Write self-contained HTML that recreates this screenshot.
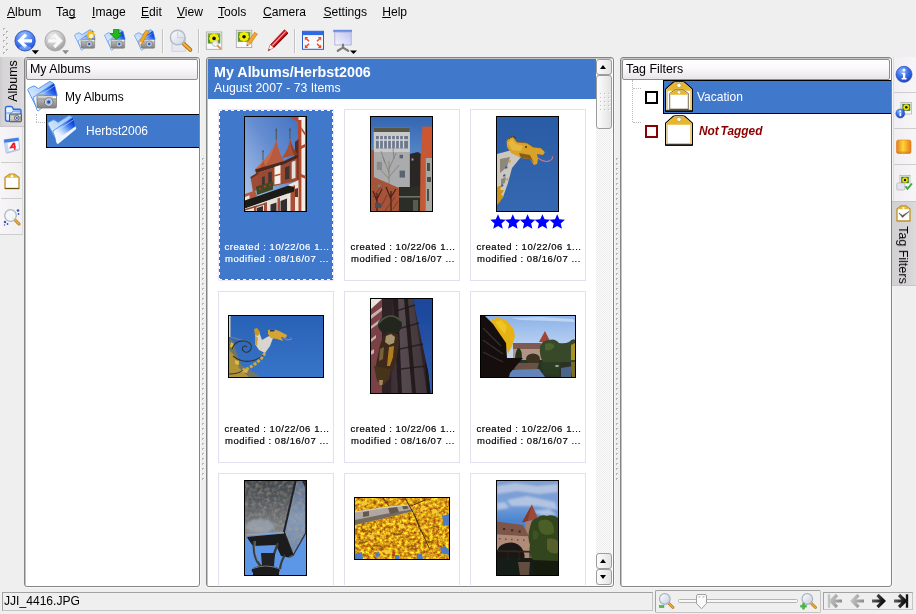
<!DOCTYPE html>
<html>
<head>
<meta charset="utf-8">
<title>digiKam</title>
<style>
html,body{margin:0;padding:0;}
body{width:916px;height:614px;overflow:hidden;background:#efefef;font-family:"Liberation Sans",sans-serif;font-size:13px;color:#000;position:relative;}
.abs{position:absolute;}
.menu span{position:absolute;top:5px;white-space:nowrap;font-size:12.1px;line-height:15px;}
.menu u{text-decoration:underline;text-underline-offset:1px;text-decoration-skip-ink:none;}
.frame{position:absolute;border:1px solid #838583;border-radius:3px;background:#fff;box-sizing:border-box;box-shadow:inset 1px 1px 0 #c4c4c4, 1px 1px 0 #f7f7f7;}
.hdr{position:absolute;box-sizing:border-box;border:1px solid #8e8e8e;border-radius:2px;background:linear-gradient(#ffffff,#fbf9fb 40%,#e8e6e8);font-size:12.4px;line-height:19px;padding-left:3px;white-space:nowrap;}
.sel{background:#4078cc;}
.cell{position:absolute;width:116px;height:172px;box-sizing:border-box;border:1px solid #e3dff0;background:#fff;}
.cell.on{background:#4078cc;border:1px solid #f4e8f0;}
.cell.on::before{content:"";position:absolute;left:0;top:0;right:0;bottom:0;background:
repeating-linear-gradient(90deg,#fff 0 3px,#3a70c8 3px 6px) 0 0/100% 1px no-repeat,
repeating-linear-gradient(90deg,#fff 0 3px,#3a70c8 3px 6px) 0 100%/100% 1px no-repeat,
repeating-linear-gradient(180deg,#fff 0 3px,#3a70c8 3px 6px) 0 0/1px 100% no-repeat,
repeating-linear-gradient(180deg,#fff 0 3px,#3a70c8 3px 6px) 100% 0/1px 100% no-repeat;}
.cap{position:absolute;left:1px;width:114px;-webkit-text-stroke:0.2px currentColor;text-align:center;font-size:9.5px;line-height:12px;letter-spacing:0.55px;white-space:nowrap;top:131px;}
.cell.on .cap{color:#fff;}
.ph{position:absolute;border:1px solid #000;box-sizing:border-box;overflow:hidden;}
.ph svg{display:block;}
.tab{position:absolute;box-sizing:border-box;}
.sunk{position:absolute;box-sizing:border-box;border:1px solid;border-color:#a2a2a2 #c4c4c4 #c4c4c4 #a2a2a2;}
.sbtn{position:absolute;width:16px;box-sizing:border-box;border:1px solid #9c9c9c;border-radius:3px;background:linear-gradient(90deg,#fcfcfc,#f0f0f0 50%,#e2e2e2);}
.sbtn i{position:absolute;left:3px;width:0;height:0;border-left:3.500px solid transparent;border-right:3.500px solid transparent;}
.sbtn i.up{top:5px;border-bottom:4px solid #000;}
.sbtn i.dn{top:5px;border-top:4px solid #000;}
</style>
</head>
<body><div id="root" style="position:absolute;left:0;top:0;width:916px;height:614px;will-change:transform;">


<svg width="0" height="0" style="position:absolute">
<defs>
<filter id="b" x="-5%" y="-5%" width="110%" height="110%"><feGaussianBlur stdDeviation="0.55"/></filter>
<filter id="b2" x="-5%" y="-5%" width="110%" height="110%"><feGaussianBlur stdDeviation="1.1"/></filter>
<filter id="leaf" x="0" y="0" width="100%" height="100%" color-interpolation-filters="sRGB">
<feTurbulence type="fractalNoise" baseFrequency="0.32" numOctaves="3" seed="11" result="n"/>
<feColorMatrix in="n" type="matrix" values="0.7 0 0 0 0.5  1.2 0 0 0 0.02  0.2 0 0 0 0  0 0 0 0 1"/>
</filter>
<filter id="grime" x="0" y="0" width="100%" height="100%" color-interpolation-filters="sRGB">
<feTurbulence type="fractalNoise" baseFrequency="0.28" numOctaves="3" seed="3" result="n"/>
<feColorMatrix in="n" type="matrix" values="0 0 0 0 0.72  0 0 0 0 0.66  0 0 0 0 0.56  2.2 0 0 0 -0.85"/>
</filter>
</defs>
</svg>


<svg width="0" height="0" style="position:absolute">
<defs>
<linearGradient id="fback" x1="0" y1="1" x2="1" y2="0"><stop offset="0" stop-color="#f4faff"/><stop offset="1" stop-color="#8cbcf6"/></linearGradient>
<linearGradient id="ffront" x1="0.150" y1="0.900" x2="0.850" y2="0.100"><stop offset="0" stop-color="#ffffff"/><stop offset="0.300" stop-color="#e4f0ff"/><stop offset="0.550" stop-color="#8ab8f8"/><stop offset="0.800" stop-color="#2c68ea"/><stop offset="1" stop-color="#0a34cc"/></linearGradient>
<linearGradient id="camg" x1="0" y1="0" x2="0" y2="1"><stop offset="0" stop-color="#e0e0e0"/><stop offset="0.450" stop-color="#a8a8a8"/><stop offset="1" stop-color="#808080"/></linearGradient>
<g id="fold32">
<path d="M1 9.500 Q0.400 8 2 7.200 L6 5.200 Q7 4.700 8 5.300 L11.500 7.600 L22 0.900 Q23 0.300 24 0.900 L26.500 2.300 L29 14 L11 29.500Z" fill="url(#fback)" stroke="#4a8cec" stroke-width="0.900"/>
<path d="M6 16.500 L26 2.900 Q27.100 2.400 27.400 3.500 L30.200 14.500 L11.600 29.600 Q10.500 30.200 10 29Z" fill="url(#ffront)" stroke="#3f80ea" stroke-width="0.800"/><path d="M7 18.500 L27.600 4.800" stroke="#dcecff" stroke-width="0.700" opacity="0.800"/>
</g>
<g id="cam32">
<rect x="10" y="14.500" width="19.500" height="12.500" rx="1.300" fill="url(#camg)" stroke="#787878" stroke-width="0.800"/>
<rect x="10" y="17.300" width="19.500" height="1.600" fill="#8c8c8c" opacity="0.550"/>
<rect x="12" y="13.200" width="5" height="1.800" fill="#a0a0a0"/>
<circle cx="21.700" cy="21" r="4.300" fill="#d8d8d8" stroke="#6c6c6c" stroke-width="0.800"/>
<circle cx="21.700" cy="21" r="2.700" fill="#9ab0d8"/>
<circle cx="21.700" cy="21" r="1.500" fill="#1c48c0"/>
<rect x="26" y="15.600" width="2.800" height="1.500" fill="#f8f8f8"/>
</g>
<g id="tag30">
<path d="M1 7.800 L8.500 1.200 Q9.300 0.700 10.300 0.700 L17.700 0.700 Q18.700 0.700 19.500 1.200 L27 7.800 L27 29.300 L1 29.300Z" fill="#fff" stroke="#000" stroke-width="1.100" stroke-linejoin="round"/>
<path d="M1.700 8.100 L8.900 1.800 Q9.500 1.400 10.300 1.400 L17.700 1.400 Q18.500 1.400 19.100 1.800 L26.300 8.100 L26.300 9.500 L1.700 9.500Z" fill="#e8b62c"/>
<path d="M2.500 9.500 L2.500 27.800 L25.500 27.800 L25.500 9.500" fill="none" stroke="#e4b440" stroke-width="1"/>
<path d="M1 29 H27" stroke="#000" stroke-width="1.300"/>
<circle cx="14" cy="4.200" r="2.100" fill="#fff" stroke="#a88420" stroke-width="0.500"/>
</g>
</defs>
</svg>

<!-- MENU -->
<div class="menu abs" style="left:0;top:0;width:916px;height:23px;">
<span style="left:7px"><u>A</u>lbum</span>
<span style="left:56px">Ta<u>g</u></span>
<span style="left:92px"><u>I</u>mage</span>
<span style="left:141px"><u>E</u>dit</span>
<span style="left:177px"><u>V</u>iew</span>
<span style="left:218px"><u>T</u>ools</span>
<span style="left:263px"><u>C</u>amera</span>
<span style="left:323.400px"><u>S</u>ettings</span>
<span style="left:382.200px"><u>H</u>elp</span>
</div>

<!-- TOOLBAR placeholder -->
<div id="toolbar" class="abs" style="left:0;top:22px;width:916px;height:35px;">
<svg width="916" height="35" viewBox="0 22 916 35">
<defs>
<radialGradient id="gb" cx="0.45" cy="0.25" r="0.8"><stop offset="0" stop-color="#a4c6ff"/><stop offset="0.5" stop-color="#4a82f2"/><stop offset="1" stop-color="#1c48c8"/></radialGradient>
<radialGradient id="gg" cx="0.4" cy="0.3" r="0.75"><stop offset="0" stop-color="#f4f4f4"/><stop offset="0.5" stop-color="#c8c8c8"/><stop offset="1" stop-color="#9a9a9a"/></radialGradient>
<linearGradient id="ff" x1="0" y1="0.600" x2="1" y2="0"><stop offset="0" stop-color="#dceeff"/><stop offset="0.45" stop-color="#7ab0f4"/><stop offset="1" stop-color="#1446d8"/></linearGradient>
<linearGradient id="cam" x1="0" y1="0" x2="0" y2="1"><stop offset="0" stop-color="#d8d8d8"/><stop offset="0.5" stop-color="#a4a4a4"/><stop offset="1" stop-color="#7c7c7c"/></linearGradient>
<linearGradient id="lens" x1="0" y1="0" x2="1" y2="1"><stop offset="0" stop-color="#ffffff"/><stop offset="1" stop-color="#c8d4e4"/></linearGradient>
<g id="albico">
<path d="M1.500 8 Q1 6.500 2.500 6 L7 4.500 L9 6 L12 5 L14 21 L8 22 Q6 22 5.500 20Z" fill="#c4e0fc" stroke="#6ea4e8" stroke-width="0.800"/>
<path d="M3.500 10 L17 3.500 Q18.500 3 19 4.500 L21 14 L8 22 Q6.500 22.500 6 20.500Z" fill="url(#ff)" stroke="#5a94e6" stroke-width="0.700"/>
<rect x="8.500" y="11.500" width="13" height="9" rx="1" fill="url(#cam)" stroke="#6c6c6c" stroke-width="0.700"/>
<rect x="8.500" y="13.300" width="13" height="1.300" fill="#8a8a8a" opacity="0.600"/>
<rect x="10" y="10.500" width="3.500" height="1.400" fill="#9a9a9a"/>
<circle cx="15.600" cy="16.300" r="2.900" fill="#d0d0d0" stroke="#707070" stroke-width="0.700"/>
<circle cx="15.600" cy="16.300" r="1.400" fill="#2c58c8"/>
<rect x="19" y="12.300" width="2" height="1.300" fill="#f4f4f4"/>
</g>
<g id="sunf">
<rect x="0" y="0" width="15.500" height="17.300" fill="#fbfbfb" stroke="#a4a4a4" stroke-width="0.800"/>
<rect x="1.500" y="1.500" width="12.500" height="10" fill="#5c9230"/>
<rect x="1.500" y="1.500" width="12.500" height="3" fill="#88aa48" opacity="0.600"/>
<g fill="#f6ee00"><circle cx="7.750" cy="6.400" r="3.300"/><circle cx="11.05" cy="6.40" r="1.75"/><circle cx="10.08" cy="8.73" r="1.75"/><circle cx="7.75" cy="9.70" r="1.75"/><circle cx="5.42" cy="8.73" r="1.75"/><circle cx="4.45" cy="6.40" r="1.75"/><circle cx="5.42" cy="4.07" r="1.75"/><circle cx="7.75" cy="3.10" r="1.75"/><circle cx="10.08" cy="4.07" r="1.75"/></g>
<circle cx="7.750" cy="6.400" r="1.800" fill="#120c04"/>
</g>
</defs>
<!-- handle -->
<g fill="#b4b4b4"><rect x="3" y="28" width="2" height="1"/><rect x="3" y="29" width="1" height="1"/><rect x="3" y="34" width="2" height="1"/><rect x="3" y="35" width="1" height="1"/><rect x="3" y="40" width="2" height="1"/><rect x="3" y="41" width="1" height="1"/><rect x="3" y="46" width="2" height="1"/><rect x="3" y="47" width="1" height="1"/><rect x="3" y="52" width="2" height="1"/><rect x="3" y="53" width="1" height="1"/><rect x="6" y="31" width="2" height="1"/><rect x="6" y="32" width="1" height="1"/><rect x="6" y="37" width="2" height="1"/><rect x="6" y="38" width="1" height="1"/><rect x="6" y="43" width="2" height="1"/><rect x="6" y="44" width="1" height="1"/><rect x="6" y="49" width="2" height="1"/><rect x="6" y="50" width="1" height="1"/></g><g fill="#ffffff"><rect x="4" y="29" width="1" height="1"/><rect x="4" y="35" width="1" height="1"/><rect x="4" y="41" width="1" height="1"/><rect x="4" y="47" width="1" height="1"/><rect x="4" y="53" width="1" height="1"/><rect x="7" y="32" width="1" height="1"/><rect x="7" y="38" width="1" height="1"/><rect x="7" y="44" width="1" height="1"/><rect x="7" y="50" width="1" height="1"/></g>
<!-- back -->
<circle cx="25.100" cy="40.800" r="10.200" fill="url(#gb)" stroke="#2a4eb8" stroke-width="0.800"/>
<path d="M32 40.800 H20.500 M26 34.600 L19.600 40.800 L26 47" stroke="#fff" stroke-width="3.200" fill="none" stroke-linejoin="miter"/><ellipse cx="25.100" cy="48" rx="6" ry="2.200" fill="#9cc0ff" opacity="0.550"/>
<path d="M31.700 50.300 L39 50.300 L35.350 54.300Z" fill="#000"/>
<!-- forward -->
<circle cx="55.100" cy="40.800" r="10.200" fill="url(#gg)" stroke="#a4a4a4" stroke-width="0.800"/>
<path d="M48.200 40.800 H59.700 M54.200 34.600 L60.600 40.800 L54.200 47" stroke="#f8f8f8" stroke-width="3.200" fill="none" stroke-linejoin="miter"/>
<path d="M62.200 50.300 L69 50.300 L65.600 54.300Z" fill="#8c8c8c"/>
<!-- album icons -->
<g transform="translate(74 29.300) scale(0.700)"><use href="#fold32"/><use href="#cam32"/></g>
<path d="M91 29.500 l1.100 2.600 l2.700 -1 l-1 2.700 l2.600 1.200 l-2.600 1.200 l1 2.700 l-2.700 -1 l-1.100 2.600 l-1.100 -2.600 l-2.700 1 l1 -2.700 l-2.600 -1.200 l2.600 -1.200 l-1 -2.700 l2.700 1z" fill="#f8b820"/><circle cx="91" cy="36" r="2.200" fill="#fff6c0"/>
<g transform="translate(104 29.300) scale(0.700)"><use href="#fold32"/><use href="#cam32"/></g>
<path d="M113.500 29.500 h5.500 v4 h3.500 l-6.250 6 l-6.250 -6 h3.500z" fill="#22b81c" stroke="#0c7a0c" stroke-width="0.700"/>
<g transform="translate(134 29.300) scale(0.700)"><use href="#fold32"/><use href="#cam32"/></g>
<path d="M146 30 l3 1.600 l-6.500 11.500 l-3.400 1.800 l0.400 -3.600z" fill="#f4a820" stroke="#b87410" stroke-width="0.600"/><path d="M139.100 44.900 l0.400-3.600 l3 1.800z" fill="#f4d8b0"/>
<!-- sep -->
<rect x="162" y="29" width="1" height="24" fill="#c2c2c2"/><rect x="163" y="29" width="1" height="24" fill="#fafafa"/>
<!-- magnifier -->
<rect x="172" y="38" width="13.500" height="13.300" fill="#e6e8f2" stroke="#c8ccd8" stroke-width="0.800"/>
<path d="M184 44 L190.300 49.800" stroke="#b06c10" stroke-width="4" stroke-linecap="round"/><path d="M184 44 L190.300 49.800" stroke="#f4b040" stroke-width="2.200" stroke-linecap="round"/>
<circle cx="177.700" cy="37.500" r="7.300" fill="url(#lens)" fill-opacity="0.900" stroke="#b4bac8" stroke-width="1.500"/>
<path d="M177.700 31.500 v6 h6" stroke="#ccd0dc" stroke-width="1" fill="none"/>
<rect x="198" y="29" width="1" height="24" fill="#c2c2c2"/><rect x="199" y="29" width="1" height="24" fill="#fafafa"/>
<!-- view image -->
<use href="#sunf" x="206.300" y="32"/>
<path d="M217.300 45.500 L220.300 48.300" stroke="#d89a48" stroke-width="2" stroke-linecap="round"/><circle cx="215.300" cy="43.500" r="2.900" fill="#f4f6fa" fill-opacity="0.880" stroke="#b4bac8" stroke-width="0.900"/>
<!-- edit image -->
<use href="#sunf" x="236.300" y="30.300"/>
<path d="M254.600 32.300 l2.800 1.700 l-7 10 l-3.600 2 l0.600 -3.800z" fill="#f6a628" stroke="#c07414" stroke-width="0.600"/><path d="M246.800 46 l0.600 -3.800 l3 1.800z" fill="#e8c8a0"/><path d="M246.800 46 l0.300 -1.600 l1.200 0.700z" fill="#803020"/>
<!-- red pencil -->
<path d="M284.500 29.800 L288 33 L273.500 47.500 L268.300 50.800 L270.300 44.800Z" fill="#d01018" stroke="#8a0810" stroke-width="0.600"/>
<path d="M272.300 45.500 L285.800 31.300" stroke="#ffb0b4" stroke-width="1.100" opacity="0.900"/><path d="M273.700 47.300 L287.800 33.200" stroke="#7a0810" stroke-width="1.200"/>
<path d="M268.300 50.800 L270.300 44.800 L273.500 47.500Z" fill="#f8f0e8"/><path d="M268.300 50.800 l0.700 -2 l1.100 0.900z" fill="#800810"/>
<rect x="294" y="29" width="1" height="24" fill="#c2c2c2"/><rect x="295" y="29" width="1" height="24" fill="#fafafa"/>
<!-- fullscreen -->
<rect x="302.500" y="31.300" width="21" height="18" fill="#f8f8ff" stroke="#2a5cc8" stroke-width="1"/>
<rect x="302.500" y="31.300" width="21" height="3.800" fill="#2f6ae0"/>
<g fill="#f04a1c" stroke="#f04a1c" stroke-width="1.500">
<path d="M304.800 37 h3.400 l-3.400 3.400z" stroke="none"/><path d="M306 38.200 L309 41.200"/>
<path d="M321.200 37 h-3.400 l3.400 3.400z" stroke="none"/><path d="M320 38.200 L317 41.200"/>
<path d="M304.800 48 h3.400 l-3.400 -3.400z" stroke="none"/><path d="M306 46.800 L309 43.800"/>
<path d="M321.200 48 h-3.400 l3.400 -3.400z" stroke="none"/><path d="M320 46.800 L317 43.800"/>
</g>
<!-- slideshow -->
<rect x="333.300" y="29.800" width="18.700" height="2.400" fill="#6a8ce0"/>
<defs><linearGradient id="scr" x1="0" y1="1" x2="1" y2="0"><stop offset="0" stop-color="#f4f4fc"/><stop offset="1" stop-color="#c0c4f0"/></linearGradient></defs><rect x="334.800" y="32" width="16.400" height="13" fill="url(#scr)" stroke="#a4a8d4" stroke-width="0.800"/>
<path d="M343 44.500 V48 M343 47.600 L337.800 50.800 M343 47.600 L348.200 50.800" stroke="#7c7c7c" stroke-width="2.200" fill="none" stroke-linecap="round"/>
<path d="M350 50.500 L357 50.500 L353.500 54Z" fill="#000"/>
</svg></div>


<!-- LEFT SIDEBAR -->

<div class="abs" style="left:0;top:57px;width:24px;height:70px;background:linear-gradient(90deg,#cccacc,#d6d4d6 12%,#dad8da 70%,#dedcde);border-bottom:1px solid #c6c6c6;box-sizing:border-box;border-radius:0 2px 0 0;"></div>
<div class="abs" style="left:0px;top:127px;width:23px;height:108px;background:linear-gradient(90deg,#f7f5f7,#f1eff1);border-right:1px solid #dcdcdc;border-bottom:1px solid #cdcdcd;box-sizing:border-box;"></div>
<div class="abs" style="left:1px;top:162px;width:21px;height:1px;background:#cdcdcd;"></div>
<div class="abs" style="left:1px;top:198px;width:21px;height:1px;background:#cdcdcd;"></div>
<div class="abs" style="left:1px;top:234px;width:21px;height:1px;background:#cdcdcd;"></div>
<div class="abs" style="left:0;top:60px;width:23px;height:43px;"><div style="position:absolute;left:13px;top:21px;transform:translate(-50%,-50%) rotate(-90deg);font-size:12.500px;white-space:nowrap;line-height:14px;">Albums</div></div>
<svg class="abs" style="left:4px;top:105px;" width="18" height="18" viewBox="0 0 18 18">
<defs><linearGradient id="sf" x1="0" y1="0" x2="1" y2="1"><stop offset="0" stop-color="#ffffff"/><stop offset="0.5" stop-color="#d4e6ff"/><stop offset="1" stop-color="#6ea6f6"/></linearGradient></defs>
<path d="M1.500 3.200 Q1.500 1.500 3.200 1.500 L7 1.500 Q8.300 1.500 8.800 2.800 L9.300 4.200 L15.500 4.200 Q17 4.200 17 5.700 L17 14.500 Q17 16.300 15.300 16.300 L3.200 16.300 Q1.500 16.300 1.500 14.600Z" fill="url(#sf)" stroke="#2c6ce2" stroke-width="1.400"/>
<path d="M2.400 8 L7 8 Q8 8 8.500 7 L9 6 L16.200 6" stroke="#4a86ea" stroke-width="0.900" fill="none"/>
<rect x="5.500" y="9" width="11.800" height="7.800" rx="0.800" fill="#b4b4b4" stroke="#4a4a52" stroke-width="0.900"/>
<rect x="6.500" y="11" width="4" height="3.500" fill="#d0d0d0"/>
<circle cx="12.800" cy="13" r="2.300" fill="#e4e4e4" stroke="#50505a" stroke-width="0.800"/><circle cx="12.800" cy="13" r="1" fill="#2c58c8"/>
<rect x="14.800" y="9.800" width="1.800" height="1.200" fill="#f4f4f4"/>
</svg>
<!-- calendar -->
<svg class="abs" style="left:3px;top:137px;" width="18" height="17" viewBox="0 0 18 17">
<path d="M1 2.800 L15.500 0.800 L16.500 12 L3.200 15.800Z" fill="#fbfbff" stroke="#9ab0d8" stroke-width="0.800"/>
<path d="M1 2.800 L15.500 0.800 L15.800 3.800 L1.500 6Z" fill="#3f7cea"/>
<path d="M1.500 6 L4.500 5.500 L6 15 L3.200 15.800Z" fill="#c4d8f8"/>
<path d="M11 5.800 L7.800 10.500 L12.800 9.800 M11.300 5.800 L11.800 12.800" stroke="#ee1c24" stroke-width="1.700" fill="none"/>
<path d="M3.200 15.800 L16.500 12 L16.800 13 L3.800 16.800Z" fill="#b4c0d8"/>
</svg>
<!-- tag -->
<svg class="abs" style="left:4px;top:173px;" width="16" height="17" viewBox="0 0 16 17">
<path d="M1 4.500 L5.500 1.200 L10.500 1.200 L15 4.500 L15 15.500 L1 15.500Z" fill="#fff" stroke="#c09020" stroke-width="1.300" stroke-linejoin="round"/>
<path d="M1.600 4.800 L5.700 1.800 L10.300 1.800 L14.400 4.800Z" fill="#e8b830"/>
<circle cx="8" cy="3.300" r="1.200" fill="#fff"/>
<path d="M1 15.500 H15" stroke="#6a5010" stroke-width="1"/>
</svg>
<!-- find -->
<svg class="abs" style="left:3px;top:208px;" width="18" height="18" viewBox="0 0 18 18">
<path d="M10.500 10.500 L16 16" stroke="#b87818" stroke-width="3" stroke-linecap="round"/><path d="M10.500 10.500 L16 16" stroke="#f0b040" stroke-width="1.400" stroke-linecap="round"/>
<circle cx="7.500" cy="7.500" r="5.800" fill="#f4f6fa" fill-opacity="0.900" stroke="#b0b6c4" stroke-width="1.300"/>
<circle cx="15" cy="2.500" r="1.300" fill="#2c58c8"/><circle cx="15.500" cy="6" r="0.900" fill="#2c58c8"/><circle cx="2" cy="14" r="1.200" fill="#2c58c8"/><circle cx="4.500" cy="16" r="0.900" fill="#2c58c8"/><circle cx="1.500" cy="17" r="0.700" fill="#2c58c8"/>
</svg>

<!-- LEFT PANEL -->
<div class="frame" style="left:24px;top:57px;width:176px;height:530px;"></div>
<div class="hdr" style="left:26px;top:59px;width:172px;height:21px;">My Albums</div>

<svg class="abs" style="left:27px;top:81px;" width="32" height="32" viewBox="0 0 32 32"><use href="#fold32"/><use href="#cam32"/></svg>
<div class="abs" style="left:36px;top:114px;width:0;height:8px;border-left:1px dotted #bcbcbc;"></div>
<div class="abs" style="left:36px;top:122px;width:9px;height:0;border-top:1px dotted #bcbcbc;"></div>
<div class="abs" style="left:65px;top:90px;font-size:12px;">My Albums</div>
<div class="abs sel" style="left:46px;top:114px;width:153px;height:34px;box-sizing:border-box;border:1px solid #000;border-right:none;"></div>

<svg class="abs" style="left:47px;top:115px;" width="31" height="31" viewBox="0 0 32 32"><use href="#fold32"/><path d="M9 26.200 L29.500 11.500 L30.200 14.500 L11.600 29.600 Q10.500 30.200 10 29Z" fill="#f0f4ff"/></svg>
<div class="abs" style="left:86px;top:124px;font-size:12px;color:#fff;">Herbst2006</div>


<!-- splitters -->
<svg class="abs" style="left:200px;top:158px;" width="6" height="324"><defs><pattern id="sd" width="6" height="5" patternUnits="userSpaceOnUse"><rect x="2" y="0" width="2" height="1" fill="#b6b6b6"/><rect x="2" y="1" width="1" height="1" fill="#b6b6b6"/><rect x="3" y="1" width="1" height="1" fill="#fff"/></pattern></defs><rect width="6" height="324" fill="url(#sd)"/></svg>
<svg class="abs" style="left:614px;top:158px;" width="6" height="324"><rect width="6" height="324" fill="url(#sd)"/></svg>

<!-- CENTER PANEL -->
<div class="frame" style="left:206px;top:57px;width:408px;height:530px;"></div>
<div class="abs sel" style="left:208px;top:59px;width:388px;height:40px;"></div>
<div class="abs" style="left:214px;top:64px;font-size:14.3px;font-weight:bold;color:#fff;white-space:nowrap;">My Albums/Herbst2006</div>
<div class="abs" style="left:214px;top:81px;font-size:12.25px;color:#fff;white-space:nowrap;">August 2007 - 73 Items</div>

<div id="grid" class="abs" style="left:208px;top:99px;width:388px;height:486px;overflow:hidden;">

<!-- cell 1 -->
<div class="cell on" style="left:10px;top:10px;">
<div class="ph" style="left:25px;top:6px;width:63px;height:96px;">
<svg width="61" height="94" viewBox="0 0 61 94">
<defs><linearGradient id="s1" x1="1" y1="0" x2="0" y2="1"><stop offset="0" stop-color="#4070c0"/><stop offset="0.45" stop-color="#648cd0"/><stop offset="0.85" stop-color="#a0bce6"/><stop offset="1" stop-color="#b0c8ea"/></linearGradient></defs>
<rect width="61" height="94" fill="url(#s1)"/>
<g filter="url(#b)">
<!-- right timber wall -->
<rect x="53" y="0" width="9" height="94" fill="#f2ece6"/>
<path d="M44.500 0 L53.500 5.500 L53.500 0Z" fill="#b8492a"/>
<rect x="53" y="3" width="3.400" height="91" fill="#b24a2c"/>
<path d="M56 29 L61 26.500 L61 29.500 L56 32Z M56 57 L61 59 L61 62 L56 60Z M56.300 10 l4.700 7 v3 l-4.700 -7z M60 0 h1 v94 h-1z" fill="#b24a2c"/>
<!-- shadow behind 2nd tower -->
<path d="M50 25 L53.500 22 L53.500 66 L50 66Z" fill="#5a2c20"/>
<!-- poles -->
<path d="M31.300 11.500 V23" stroke="#4a5a56" stroke-width="1.100"/><circle cx="31.300" cy="13.500" r="0.900" fill="#4a5a56"/>
<path d="M45 11 V22" stroke="#4a5a56" stroke-width="1.100"/><circle cx="45" cy="13" r="0.900" fill="#4a5a56"/>
<path d="M18 33 V43" stroke="#4a5a56" stroke-width="1"/><circle cx="18" cy="34.500" r="0.800" fill="#4a5a56"/>
<!-- second roof -->
<path d="M45 21 Q44.500 30 37 41 L52.500 37.500 Q47 30 45 21Z" fill="#a85034"/>
<path d="M45 21 Q46 30 52.500 37.500 L49 38.300 Q45.500 30 45 21Z" fill="#8a3c28"/>
<!-- main roof -->
<path d="M31.300 22 Q30 34 10 52.500 L39 44 Q33 34 31.300 22Z" fill="#b85a3c"/>
<path d="M31.300 22 Q30 34 10 52.500 L20 49.500 Q29 36 31.300 22Z" fill="#c66a48"/>
<!-- small roof -->
<path d="M18 42 Q17 49 11.500 56 L23 52.500 Q19 48 18 42Z" fill="#b05438"/>
<!-- eave shadow -->
<path d="M10 52.500 L39 44 L52.500 37.500 L52.500 41 L39 47.500 L11 56Z" fill="#4e261c"/>
<!-- dormer wall -->
<path d="M11 56 L39 47.500 L52.500 41 L52.500 64 L14 72Z" fill="#9c4a30"/>
<path d="M29.500 50 L35.500 48 L35.500 66.500 L29.500 67.500Z" fill="#f4f0ec"/>
<path d="M46.700 45 L50.500 43.500 L50.500 61 L46.700 62Z" fill="#e6e0dc"/>
<path d="M17 60 l2.800 -0.800 v9 l-2.800 0.700z M23.300 55.500 l3.500 -1 v11 l-3.500 0.800z M40 50.500 l4.500 -1.700 v13 l-4.500 1z" fill="#3e3434"/>
<path d="M29.500 58 L35.500 56.500 L35.500 58 L29.500 59.500Z" fill="#a85030"/>
<!-- left lower bit -->
<path d="M5.500 60 L13.500 55 L14 72 L8 75 Z" fill="#a04c34"/>
<path d="M5.500 60 L13.500 55 L13.500 57 L6 62Z" fill="#6a3424"/>
<!-- flowers -->
<path d="M11 69.500 L28 64.500 L28 72.500 L12 78Z" fill="#3c4a24"/>
<circle cx="15" cy="72" r="1.200" fill="#a83028"/><circle cx="20" cy="69.500" r="1.200" fill="#b83830"/><circle cx="25" cy="68" r="1" fill="#a83028"/>
<!-- wall right of band -->
<path d="M43 68 L53.500 63 L53.500 94 L43 94Z" fill="#ece6e2"/>
<path d="M45.500 70 l4.500 -2 v26 h-4.500z" fill="#a85034"/>
<path d="M50 72 L53 71 L53 80 L50 80Z" fill="#5a3428"/>
<!-- lower left roof -->
<path d="M0 77 L10 73.500 L12 79 L0 85.500Z" fill="#b25a40"/>
<path d="M0 80 l4.500 -1.800 v3.500 l-4.500 2z" fill="#f0e4d8"/>
<!-- dark band -->
<path d="M0 83.500 L43.600 68.500 L49.500 70.500 L49 74.500 L0 91.500Z" fill="#1e1a18"/>
<!-- below band -->
<path d="M0 91.500 L43 76.500 L43 94 L0 94Z" fill="#e8e0da"/>
<path d="M9 89.500 l2.500 -0.800 v5.300 h-2.500z M19 86 l3 -1 v9 h-3z M32.500 81.500 l2.500 -0.800 v13.300 h-2.500z" fill="#a85034"/>
<path d="M25.500 87.500 l6 -2 v8.500 h-6z M35.500 84 l6.500 -2.500 v12.500 h-6.500z M12 91 l6 -2 v5 h-6z" fill="#342e2e"/>
<path d="M0 92 L20 86 L20 87.500 L0 93.500Z" fill="#8a4630"/>
</g>
</svg></div>
<div class="cap">created : 10/22/06 1...<br>modified : 08/16/07 ...</div></div>

<!-- cell 2 -->
<div class="cell" style="left:136px;top:10px;">
<div class="ph" style="left:25px;top:6px;width:63px;height:96px;">
<svg width="61" height="94" viewBox="0 0 61 94">
<defs><linearGradient id="s2" x1="0" y1="0" x2="0" y2="1"><stop offset="0" stop-color="#3466b2"/><stop offset="0.45" stop-color="#5a8acb"/><stop offset="1" stop-color="#5a8acb"/></linearGradient></defs>
<rect width="61" height="94" fill="url(#s2)"/>
<g filter="url(#b)">
<rect x="38.500" y="37" width="12" height="57" fill="#2b2725"/>
<path d="M38.500 37 L47 35 L50 37Z" fill="#2b2725"/>
<rect x="2.800" y="10.500" width="36" height="60" fill="#a9abac"/><rect x="2.800" y="15" width="36" height="20" fill="#c9cac8"/>
<rect x="2.800" y="10.500" width="36" height="4.500" fill="#59544a"/>
<rect x="5" y="19" width="32" height="12.500" fill="#6c788e"/>
<path d="M8.500 19 v12.500 M12.500 19 v12.500 M16.500 19 v12.500 M20.500 19 v12.500 M24.500 19 v12.500 M28.500 19 v12.500 M32.500 19 v12.500 M5 23 h32" stroke="#d8d8d4" stroke-width="1.300"/>
<rect x="28.600" y="37.800" width="3.400" height="3.500" fill="#5a6270"/><rect x="28.600" y="53.600" width="5.400" height="7" fill="#5a6270"/><rect x="5.800" y="44.800" width="5.200" height="8" fill="#8a8c88"/>
<path d="M18 70 V44 M18 56 L12 40 M18 52 L25 36 M18 62 L9 52 M18 60 L28 48 M14 46 L10 34 M23 42 L22 32" stroke="#7e786e" stroke-width="0.700" fill="none"/>
<path d="M0 33 L2.800 33 L2.800 60 L12 64 L28 71 L28 94 L0 94Z" fill="#a65238"/>
<path d="M6 94 V76 M6 84 L2 74 M6 82 L11 72 M20 94 V74 M20 82 L15 70 M20 80 L25 72" stroke="#4a241a" stroke-width="1.300" fill="none"/><path d="M2 80 L10 70 M10 90 L16 78 M14 94 L24 80 M22 92 L27 84" stroke="#6a3424" stroke-width="0.900" fill="none" opacity="0.800"/>
<rect x="7" y="67.500" width="2.600" height="2.600" fill="#7a8088"/>
<rect x="4" y="86" width="6" height="5" fill="#4a5058"/>
<rect x="28" y="70" width="21" height="24" fill="#2a2d28"/>
<rect x="28" y="79" width="21" height="1.600" fill="#6e726a"/>
<rect x="42" y="83" width="5" height="11" fill="#585c4c"/>
<path d="M51.500 9.700 L61 9.700 L61 41 L55 41 L54.500 94 L49 94 L49.500 41Z" fill="#c45a36"/>
<path d="M51.500 9.700 L61 9.700 L61 40 L57 40Z" fill="#cc5630"/>
<rect x="54.800" y="41" width="6.200" height="53" fill="#a9a9a3"/>
<path d="M56 46 h3 v8 h-3z M56 60 h4 v5 h-4z M56 72 h2 v12 h-2z" fill="#4e4e4c"/>
<rect x="40.500" y="41.500" width="2" height="2" fill="#9aa0a8"/>
</g>
</svg></div>
<div class="cap">created : 10/22/06 1...<br>modified : 08/16/07 ...</div></div>

<!-- cell 3 -->
<div class="cell" style="left:262px;top:10px;">
<div class="ph" style="left:25px;top:6px;width:63px;height:96px;">
<svg width="61" height="94" viewBox="0 0 61 94">
<defs><linearGradient id="s3" x1="0" y1="0" x2="0" y2="1"><stop offset="0" stop-color="#2a5ca6"/><stop offset="1" stop-color="#3668b2"/></linearGradient></defs>
<rect width="61" height="94" fill="url(#s3)"/>
<g filter="url(#b)">
<path d="M0 37 L15 33 L24 40 L15 51 L11 66 L6 80 L0 84Z" fill="#cdc8be"/>
<path d="M3 42 L13 40 L10 50 L3 56Z M4 62 l5-2 l-1 6 l-4 2z" fill="#8e887c"/>
<path d="M0 70 L5 68 L3 73 L7 73 L4 78 L7 79 L2 86 L0 88Z" fill="#c8961e"/>
<path d="M9.600 24 L12 21 L16 19.500 L20 25 L30 26 L36 30 L44 31 L48 35 L46 38 L40 37 L41 42 L40 47 L37 48 L33 42 L24 41 L14 36 L10 30Z" fill="#d9a32c"/>
<path d="M11 26 L15 22 L19 27 L26 29 L24 34 L15 33Z" fill="#e6b840"/>
<path d="M22 36 L33 38 L37 46 L33 42 L24 41Z" fill="#8a5c14"/>
<path d="M12 22 q3 -4 7 -1" stroke="#3a2a10" stroke-width="0.9" fill="none"/>
<path d="M40 40 Q47 46 52 44 Q57 42 55 39" stroke="#c27888" stroke-width="1.1" fill="none"/>
<circle cx="29" cy="30" r="0.900" fill="#3a2a10"/><path d="M9.600 24 L12 21 L16 19.500 L20 25 L30 26 L36 30 L44 31 L48 35" stroke="#7a5410" stroke-width="0.600" fill="none"/><path d="M6 58 l2 -1 l0.500 2 l-2 1z M4 68 l2 -1 l0.500 2 l-2 1z M8 50 l2 -1 l0.500 2 l-2 1z" fill="#3a5a9a"/><path d="M11 44 l3 -1 l-1 3z M9 62 l2.500 -1 l-1 3z" fill="#c89a28"/>
</g>
</svg></div>
<div class="abs" style="left:19px;top:104px;width:76px;height:16px;">
<svg width="76" height="16" viewBox="0 0 76 16"><g fill="#0000ff">
<path id="st" d="M8.00 0.20 L10.17 5.31 L15.70 5.80 L11.52 9.44 L12.76 14.85 L8.00 12.00 L3.24 14.85 L4.48 9.44 L0.30 5.80 L5.83 5.31Z"/>
<use href="#st" x="14.800"/><use href="#st" x="29.600"/><use href="#st" x="44.400"/><use href="#st" x="59.200"/>
</g></svg></div>
<div class="cap">created : 10/22/06 1...<br>modified : 08/16/07 ...</div></div>

<!-- cell 4 -->
<div class="cell" style="left:10px;top:192px;">
<div class="ph" style="left:9px;top:23px;width:96px;height:63px;">
<svg width="94" height="61" viewBox="0 0 94 61">
<defs><linearGradient id="s4" x1="0" y1="0" x2="0" y2="1"><stop offset="0" stop-color="#2862b6"/><stop offset="1" stop-color="#3874c8"/></linearGradient></defs>
<rect width="94" height="61" fill="url(#s4)"/>
<g filter="url(#b)">
<rect x="0" y="0" width="1.500" height="21" fill="#d8d0c0"/>
<path d="M0 22 L4 25 L8 38 L12 49 L26 57 L30 61 L0 61Z" fill="#8a7a3c" opacity="0.7"/>
<path d="M0 34 L6 40 L10 52 L20 61 L0 61Z" fill="#c09a30" opacity="0.8"/><path d="M2 26 l3 2 l-1 4 l-3 -1z M6 44 l4 1 l0 4 l-4 -1z M14 52 l5 2 l-1 3 l-5 -1z" fill="#e0b838"/>
<path d="M1 21 L20 26" stroke="#8a8a80" stroke-width="0.8"/>
<path d="M3 33 Q6 24 16 25 Q24 27 22 33 Q20 37 16 36 Q12 34 14 31 Q16 29 18 31" stroke="#34342c" stroke-width="1.1" fill="none"/>
<path d="M4 40 Q14 48 26 44 Q33 41 36 37" stroke="#34342c" stroke-width="1.100" fill="none"/>
<path d="M0 58 Q10 58 14 54" stroke="#34342c" stroke-width="1" fill="none"/>
<path d="M36 37 L32 43 L26 48 L20 52 L14 55" stroke="#d0a838" stroke-width="3" fill="none" stroke-dasharray="3 1.500"/>
<path d="M27 13 L30 16 L33 24 L40 20 L44 22 L41 30 L36 37 L30 34 L26 28 L26 18Z" fill="#d9d5cd"/>
<path d="M25 13 L28 12 L31 16 L29 20 L26 19Z" fill="#c89828"/>
<path d="M26 19 L29 22 L28 30 L26 28Z" fill="#c8a040"/>
<path d="M39 14 L44 13 L50 15 L58 19 L57 22 L52 21 L54 25 L48 23 L42 22 L39 18Z" fill="#d6a432"/>
<path d="M41 13.500 L46 13.500 L45 15.500 L41 15.500Z" fill="#2a3460"/>
<path d="M54 22 Q58 25 62 23.500 Q63 22 61.500 21.500" stroke="#c88090" stroke-width="0.9" fill="none"/>
</g>
</svg></div>
<div class="cap">created : 10/22/06 1...<br>modified : 08/16/07 ...</div></div>

<!-- cell 5 -->
<div class="cell" style="left:136px;top:192px;">
<div class="ph" style="left:25px;top:6px;width:63px;height:96px;">
<svg width="61" height="94" viewBox="0 0 61 94">
<defs><linearGradient id="s5" x1="0" y1="0" x2="0" y2="1"><stop offset="0" stop-color="#1a469a"/><stop offset="1" stop-color="#2e5eb2"/></linearGradient>
<linearGradient id="w5" x1="0" y1="0" x2="1" y2="0"><stop offset="0" stop-color="#30242a"/><stop offset="0.5" stop-color="#42363c"/><stop offset="1" stop-color="#261c22"/></linearGradient></defs>
<rect width="61" height="94" fill="url(#w5)"/>
<g filter="url(#b)">
<path d="M42 0 L61 0 L61 94 L59.500 94 L57 72Z" fill="url(#s5)"/>
<path d="M57 72 L59.500 94 L56 94 L54 60Z" fill="#1c1618"/>
<path d="M22 0 L27 0 L31 94 L27 94Z M33 0 L37 0 L45 94 L41 94Z" fill="#1e1618" opacity="0.850"/>
<path d="M27 0 L33 0 L41 94 L31 94Z" fill="#6a5c62" opacity="0.500"/>
<path d="M37 0 L42 0 L56 94 L45 94Z" fill="#5c4e54" opacity="0.450"/>
<path d="M25 12 L44 6 M27 30 L48 24 M29 50 L52 45 M30 70 L55 67" stroke="#1c1416" stroke-width="1.600" opacity="0.700"/>
<path d="M0 0 L17 0 L13 40 L11 94 L0 94Z" fill="#7a4246"/>
<path d="M0 0 L11 0 L0 10Z" fill="#ece4dc"/>
<path d="M0 16 L14 6 L14 9 L0 20Z M0 27 L11 19 L11 22 L0 30Z M0 40 L5 36 L5 39 L0 43Z M0 52 l3 -2 v4 l-3 2z" fill="#cbb0a8"/>
<path d="M11 0 L22 0 L20 94 L11 94Z" fill="#2e2426"/>
<ellipse cx="19" cy="26" rx="12" ry="9.500" fill="#23281f"/>
<path d="M8 24 Q19 11 30 22" stroke="#4c5440" stroke-width="1.600" fill="none"/>
<path d="M12 38 L17 33 L27 35 L28 46 L26 58 L22 72 L10 76 L4 70 L7 56 L9 46Z" fill="#3c2a1c"/>
<path d="M15 37 L20 35 L24 38 L23 44 L18 46 L14 43Z" fill="#a8946e"/>
<path d="M18 48 L23 47 L22 58 L19 67 L16 67 L17 57Z" fill="#b07c1c"/>
<path d="M9 50 L13 48 L12 60 L8 62Z" fill="#7a6038"/>
<path d="M3 67 L20 70 L18 80 L12 86 L6 82Z" fill="#46321f"/>
<path d="M8 81 L12 81 L11.500 86 L8.500 86Z" fill="#a08858"/>
</g>
</svg></div>
<div class="cap">created : 10/22/06 1...<br>modified : 08/16/07 ...</div></div>

<!-- cell 6 -->
<div class="cell" style="left:262px;top:192px;">
<div class="ph" style="left:9px;top:23px;width:96px;height:63px;">
<svg width="94" height="61" viewBox="0 0 94 61">
<defs><linearGradient id="s6" x1="0" y1="0" x2="0" y2="1"><stop offset="0" stop-color="#8cb2e8"/><stop offset="0.6" stop-color="#c4d8f4"/><stop offset="1" stop-color="#bcd4f2"/></linearGradient></defs>
<rect width="94" height="61" fill="url(#s6)"/>
<g filter="url(#b)">
<path d="M30 2 L60 1 L92 3 L94 6 L70 5 L40 4Z" fill="#c8dcf4" opacity="0.8"/>
<path d="M9 5 L16 1.500 L25 4 L32 12 L34 20 L31 30 L27 38 L24 28 L12 9Z" fill="#e6b212"/>
<path d="M14 6 L20 4 L26 10 L24 18 L18 12Z" fill="#f0c420"/>
<rect x="28" y="44" width="66" height="17" fill="#2a3028"/>
<path d="M32 27 L60 27 L60 33 L32 33Z" fill="#7e5a50"/>
<rect x="32" y="33" width="29" height="11" fill="#b09484"/>
<ellipse cx="52" cy="43" rx="7" ry="5.500" fill="#3a3224"/>
<path d="M64 15 L58 26 L69.500 26Z" fill="#a04434"/>
<rect x="60.500" y="26" width="6.500" height="8" fill="#a88070"/>
<path d="M59 30 Q62 24 68 24 Q74 22 78 27 Q84 28 88 26 Q92 22 94 24 L94 46 L62 46 Q58 40 59 30Z" fill="#37492a"/>
<path d="M64 28 Q70 25 74 30 Q70 36 64 34Z" fill="#4c6230"/>
<path d="M90 29 L94 27 L94 44 L90 44Z" fill="#a89220"/>
<path d="M34 42 Q35 32 38 32 Q41 34 41 42Z" fill="#28321e"/>
<path d="M32 47 L58 47 L56 54 L34 54Z" fill="#7a5a4c" opacity="0.8"/>
<path d="M28 54 L58 53 L64 61 L28 61Z" fill="#6484b8"/>
<path d="M60 46 L80 46 L78 60 L62 58Z" fill="#2c3c20"/>
<path d="M80 52 L92 50 L90 61 L80 61Z" fill="#5a7cb0" opacity="0.7"/>
<path d="M90 46 L94 46 L94 61 L91 61Z" fill="#7a6c20"/>
<ellipse cx="76" cy="50" rx="2" ry="1" fill="#a8a8a0"/>
<path d="M0 0 L4 0 L12 8 L25 27 L26 42 L42 42 L29 57 L28 61 L0 61Z" fill="#15110f"/>
<path d="M2 12 L20 30 M2 24 L22 38 M2 36 L22 46" stroke="#34302c" stroke-width="1.200"/>
</g>
</svg></div>
<div class="cap">created : 10/22/06 1...<br>modified : 08/16/07 ...</div></div>

<!-- cell 7 -->
<div class="cell" style="left:10px;top:374px;">
<div class="ph" style="left:25px;top:6px;width:63px;height:96px;">
<svg width="61" height="94" viewBox="0 0 61 94">
<defs><linearGradient id="g7" x1="0" y1="0" x2="0" y2="1"><stop offset="0" stop-color="#3e454c"/><stop offset="0.5" stop-color="#5e6268"/><stop offset="1" stop-color="#80868e"/></linearGradient>
<linearGradient id="g7b" x1="0" y1="0" x2="0" y2="1"><stop offset="0" stop-color="#5a6c88"/><stop offset="0.5" stop-color="#8298b8"/><stop offset="1" stop-color="#7088ac"/></linearGradient>
<clipPath id="c7"><path d="M0 0 L61 0 L61 52 L48 74.500 L39 51 L1.400 52.700 L0 50Z"/></clipPath></defs>
<rect width="61" height="94" fill="#5b97e6"/>
<g filter="url(#b)">
<path d="M0 0 L50.600 0 L39 51 L1.400 52.700 L0 50Z" fill="url(#g7)"/>
<ellipse cx="15" cy="45" rx="14" ry="7" fill="#a8b8cc" opacity="0.550" filter="url(#b2)"/>
<path d="M50.600 0 L61 0 L61 52 L48 74.500 L39 51Z" fill="url(#g7b)"/>
<rect x="0" y="0" width="61" height="76" filter="url(#grime)" clip-path="url(#c7)" opacity="0.500"/>
<path d="M57 0 L61 0 L61 8Z" fill="#2a2a2c"/>
<path d="M50.600 0 L39 51 L48 74.500" stroke="#242426" stroke-width="2" fill="none"/>
<path d="M60.700 4 L60.700 52 L48 74.500" stroke="#34363a" stroke-width="1.400" fill="none"/>
<path d="M1.500 56 L39 52.500 L48.500 74.500 L44 76.500 L36 75 L31 64 L8 65Z" fill="#1a1a1a"/>
<path d="M0.500 53.800 L39 51.600" stroke="#a4a4a2" stroke-width="1.300"/>
<path d="M0.500 53.500 L2 58" stroke="#8a8a88" stroke-width="1.500"/>
<path d="M9 60 Q8 72 12 80 Q14 84 17 86" stroke="#3a3a3c" stroke-width="2.400" fill="none"/>
<path d="M10.200 60 Q9.200 72 13 80" stroke="#a0a0a0" stroke-width="0.700" fill="none"/>
<path d="M33 62 Q29 72 27 80 Q26 84 25 86" stroke="#3a3a3c" stroke-width="2.400" fill="none"/>
<path d="M40 74 Q36 80 35 88" stroke="#3a3a3c" stroke-width="2.200" fill="none"/>
<path d="M44 76 q3 0 3.500 -2" stroke="#55565a" stroke-width="1.400" fill="none"/>
<path d="M16 72 L30 72 L29 85 L17 85Z" fill="#222224"/>
<ellipse cx="20.700" cy="89.500" rx="14" ry="5" fill="#1c1c1e"/>
<path d="M8 87.500 Q20.700 82.500 33.500 87.500" stroke="#77787a" stroke-width="1" fill="none"/>
<rect x="8" y="90" width="26" height="4" fill="#1c1c1e"/>
</g>
</svg></div>
</div>

<!-- cell 8 -->
<div class="cell" style="left:136px;top:374px;">
<div class="ph" style="left:9px;top:23px;width:96px;height:63px;">
<svg width="94" height="61" viewBox="0 0 94 61">
<rect width="94" height="61" fill="#d09a18"/>
<rect width="94" height="61" filter="url(#leaf)"/>
<g filter="url(#b)">
<path d="M0 56 L7 54 L8 61 L0 61Z M87 18 L94 16 L94 28 L89 27Z M85 50 l5 -2 l4 4 v5 l-7 -2z M62 56 l5 0 l1 5 l-6 0z M20 55 l4 -1 l1 4 l-4 1z M40 57 l4 0 l0 4 l-4 0z" fill="#4c7cc4"/>
<path d="M0 14 L30 9.500 L54 7 L58 13 L30 20 L0 27Z" fill="#b0a8a0"/>
<path d="M0 22 L30 16 L57 11.500 L58 13 L30 20 L0 27Z" fill="#746a5e"/>
<path d="M33 10 l9 -1 l2 5 l-9 2z M8 14 l6 -1 l0 5 l-6 1z M47 8 l5 -0.500 l1.500 3 l-5 1z" fill="#62584c"/>
<path d="M0 14 L30 9.500 L54 7" stroke="#d8d4cc" stroke-width="1" fill="none"/>
<path d="M28 0 L34 8 M50 0 L60 18 L66 34 M56 8 L70 2 M60 18 L74 50" stroke="#4a3410" stroke-width="1" fill="none"/>
<path d="M8 34 q5 -3 9 1 M38 36 q6 2 10 -2 M70 42 q4 4 9 0 M18 48 q6 -2 10 2 M52 50 q4 -4 9 -1 M76 30 q4 -3 8 0 M4 44 q4 2 8 -1" stroke="#7a4c0a" stroke-width="1.600" fill="none" opacity="0.800"/>
<path d="M14 38 l4 -2 l2 4 l-4 2z M44 26 l5 0 l0 4 l-5 0z M76 12 l5 -1 l1 4 l-5 1z M30 52 l5 -1 l0 4 l-5 1z M64 30 l4 -2 l2 4z M6 4 l5 -1 l1 4 l-5 1z M66 8 l4 0 l0 4 l-4 0z" fill="#f4cc3c" opacity="0.900"/>
</g>
</svg></div>
</div>

<!-- cell 9 -->
<div class="cell" style="left:262px;top:374px;">
<div class="ph" style="left:25px;top:6px;width:63px;height:96px;">
<svg width="61" height="94" viewBox="0 0 61 94">
<defs><linearGradient id="s9" x1="0" y1="0" x2="0" y2="1"><stop offset="0" stop-color="#7c9ed2"/><stop offset="0.25" stop-color="#7aa0d8"/><stop offset="0.42" stop-color="#4c84d0"/><stop offset="1" stop-color="#5a8cd0"/></linearGradient></defs>
<rect width="61" height="94" fill="url(#s9)"/>
<g filter="url(#b2)">
<path d="M0 5 L18 2 L40 5 L61 3 L61 11 L42 13 L20 10 L0 13Z M10 19 L30 15 L58 21 L61 29 L40 25 L14 25Z M34 30 L52 28 L61 34 L46 35Z M0 22 L8 21 L12 27 L0 29Z" fill="#b8c8e2" opacity="0.900"/>
</g>
<g filter="url(#b)">
<path d="M35 23.500 L25 41.500 L41 37.500Z" fill="#9c4a38"/>
<path d="M35 23.500 L25 41.500 L30.500 40Z" fill="#843a2c"/>
<path d="M28.500 41 L37 39 L37 64 L29 64Z" fill="#a88070"/>
<path d="M0 40.400 L26 44 L32 55.500 L0 53.600Z" fill="#7e5646"/>
<path d="M6 47 h2.200 v2 h-2.200z M14 48.300 h2.200 v2 h-2.200z M21.500 49.600 h2.200 v2 h-2.200z" fill="#3a2a24"/>
<path d="M0 53.600 L32 55.500 L34 78 L0 78Z" fill="#b08c78"/>
<path d="M2 57 h1.500 v1.500 h-1.500z M8 57.400 h1.500 v1.500 h-1.500z M14 57.800 h1.500 v1.500 h-1.500z M20 58.200 h1.500 v1.500 h-1.500z M26 58.600 h1.500 v1.500 h-1.500z" fill="#6a4c40"/>
<path d="M0 70 Q2 62 13.700 61.500 Q25 62 27.500 74 L27.500 80 L0 80Z" fill="#1a1814"/>
<rect x="0" y="77" width="61" height="17" fill="#191d15"/>
<path d="M0 69 L37 70 L37 71.800 L0 70.800Z" fill="#2e2a22"/>
<path d="M11 70 v9 M22 70 v9 M33 70 v8" stroke="#2a261e" stroke-width="1.100"/>
<path d="M33 46 Q34 38 40 37 Q44 33 50 35 Q56 33 61 37 L61 80 L36 79 Q31 72 33 64 Q30 56 33 46Z" fill="#32441e"/>
<path d="M42 40 Q48 37 53 40 Q58 44 57 52 Q50 56 44 52 Q40 46 42 40Z" fill="#4a5e26"/>
<path d="M50 58 Q56 56 61 60 L61 72 Q54 74 50 68Z" fill="#56602a"/>
<path d="M36 50 Q40 48 42 54 Q40 60 36 58Z" fill="#3e5222"/>
<path d="M21 81 L33 81 L32 94 L23 94Z" fill="#6a5444" opacity="0.900"/>
<path d="M36 80 L61 80 L61 94 L38 94Z" fill="#161c10"/>
</g>
</svg></div>
</div>

</div>


<!-- SCROLLBAR -->
<div class="abs" style="left:596px;top:59px;width:16px;height:526px;background:#f6f6f6;background-image:repeating-conic-gradient(#ececec 0% 25%, #fcfcfc 0% 50%);background-size:2px 2px;"></div>
<div class="sbtn" style="left:596px;top:59px;height:16px;"><i class="up"></i></div>
<div class="sbtn" style="left:596px;top:75px;height:54px;">
<svg class="abs" style="left:2px;top:16px" width="12" height="21"><g fill="#c0c0c0"><rect x="1" y="1" width="1" height="1"/><rect x="5" y="1" width="1" height="1"/><rect x="9" y="1" width="1" height="1"/><rect x="1" y="5" width="1" height="1"/><rect x="5" y="5" width="1" height="1"/><rect x="9" y="5" width="1" height="1"/><rect x="1" y="9" width="1" height="1"/><rect x="5" y="9" width="1" height="1"/><rect x="9" y="9" width="1" height="1"/><rect x="1" y="13" width="1" height="1"/><rect x="5" y="13" width="1" height="1"/><rect x="9" y="13" width="1" height="1"/><rect x="1" y="17" width="1" height="1"/><rect x="5" y="17" width="1" height="1"/><rect x="9" y="17" width="1" height="1"/></g><g fill="#fff"><rect x="2" y="2" width="1" height="1"/><rect x="6" y="2" width="1" height="1"/><rect x="10" y="2" width="1" height="1"/><rect x="2" y="6" width="1" height="1"/><rect x="6" y="6" width="1" height="1"/><rect x="10" y="6" width="1" height="1"/><rect x="2" y="10" width="1" height="1"/><rect x="6" y="10" width="1" height="1"/><rect x="10" y="10" width="1" height="1"/><rect x="2" y="14" width="1" height="1"/><rect x="6" y="14" width="1" height="1"/><rect x="10" y="14" width="1" height="1"/><rect x="2" y="18" width="1" height="1"/><rect x="6" y="18" width="1" height="1"/><rect x="10" y="18" width="1" height="1"/></g></svg>
</div>
<div class="sbtn" style="left:596px;top:553px;height:16px;"><i class="up"></i></div>
<div class="sbtn" style="left:596px;top:569px;height:16px;"><i class="dn"></i></div>

<!-- RIGHT PANEL -->
<div class="frame" style="left:620px;top:57px;width:272px;height:530px;"></div>
<div class="hdr" style="left:622px;top:59px;width:268px;height:21px;">Tag Filters</div>
<div class="abs sel" style="left:663px;top:80px;width:228px;height:34px;box-sizing:border-box;border:1px solid #000;border-right:none;"></div>
<div class="abs" style="left:697px;top:90px;font-size:12px;color:#fff;">Vacation</div>
<div class="abs" style="left:699px;top:124px;font-size:11.9px;word-spacing:-1.500px;color:#8b0000;font-weight:bold;font-style:italic;">Not Tagged</div>


<!-- right tree -->
<div class="abs" style="left:632px;top:80px;width:0;height:42px;border-left:1px dotted #bcbcbc;"></div>
<div class="abs" style="left:633px;top:88px;width:8px;height:0;border-top:1px dotted #bcbcbc;"></div>
<div class="abs" style="left:633px;top:122px;width:8px;height:0;border-top:1px dotted #bcbcbc;"></div>
<div class="abs" style="left:645px;top:91px;width:13px;height:13px;box-sizing:border-box;border:2px solid #000;background:#fff;"></div>
<div class="abs" style="left:645px;top:125px;width:13px;height:13px;box-sizing:border-box;border:2px solid #8b0000;background:#fff;"></div>
<svg class="abs" style="left:664px;top:81px;" width="30" height="31" viewBox="0 0 28 30"><use href="#tag30"/>
<path d="M5 12 L10 8.700 L18 8.700 L23 12 L23 27.800 L5 27.800Z" fill="#fff" stroke="#6e6048" stroke-width="0.900" stroke-linejoin="round"/>
<path d="M5.600 12.200 L10.200 9.300 L17.800 9.300 L22.400 12.200 L22.400 13.300 L5.600 13.300Z" fill="#e8b62c"/><circle cx="14" cy="11" r="1.200" fill="#fff"/>
<path d="M5 27.400 H23" stroke="#5a4c38" stroke-width="1.200"/>
</svg>
<svg class="abs" style="left:664px;top:115px;" width="30" height="31" viewBox="0 0 28 30"><use href="#tag30"/></svg>

<!-- RIGHT SIDEBAR -->

<div class="abs" style="left:893px;top:57px;width:23px;height:144px;background:linear-gradient(90deg,#f1eff1,#f7f5f7);border-left:1px solid #dcdcdc;box-sizing:border-box;"></div>
<div class="abs" style="left:894px;top:92px;width:22px;height:1px;background:#cdcdcd;"></div>
<div class="abs" style="left:894px;top:128px;width:22px;height:1px;background:#cdcdcd;"></div>
<div class="abs" style="left:894px;top:164px;width:22px;height:1px;background:#cdcdcd;"></div>
<div class="abs" style="left:892px;top:201px;width:24px;height:85px;background:linear-gradient(90deg,#d2d0d2,#d6d4d6 70%,#dcdadc);border-top:1px solid #c6c6c6;border-bottom:1px solid #c6c6c6;box-sizing:border-box;"></div>
<!-- info -->
<svg class="abs" style="left:895px;top:65px;" width="18" height="18" viewBox="0 0 18 18">
<defs><radialGradient id="ig" cx="0.400" cy="0.300" r="0.750"><stop offset="0" stop-color="#8fb8ff"/><stop offset="0.500" stop-color="#3a70ea"/><stop offset="1" stop-color="#1a3fb0"/></radialGradient></defs>
<circle cx="9" cy="9.300" r="8" fill="url(#ig)" stroke="#2a4eb8" stroke-width="0.700"/>
<circle cx="9" cy="5" r="1.500" fill="#fff"/><path d="M6.800 7.800 h3.500 v5.200 h1.300 v1.400 h-5 v-1.400 h1.400 v-3.800 h-1.200z" fill="#fff"/>
</svg>
<!-- img info -->
<svg class="abs" style="left:895px;top:101px;" width="18" height="18" viewBox="0 0 18 18">
<rect x="6" y="1.500" width="10.500" height="11.500" fill="#fafafa" stroke="#a8a8a8" stroke-width="0.700"/><rect x="7.300" y="2.800" width="8" height="7" fill="#3e7a2a"/><circle cx="11.300" cy="6.300" r="3" fill="#f2e000"/><circle cx="11.300" cy="6.300" r="1.300" fill="#1c1408"/>
<circle cx="5.300" cy="12.500" r="4.500" fill="url(#ig)" stroke="#2a4eb8" stroke-width="0.500"/><circle cx="5.300" cy="10.200" r="0.900" fill="#fff"/><rect x="4.500" y="11.700" width="1.700" height="3.500" fill="#fff"/>
</svg>
<!-- colour -->
<svg class="abs" style="left:896px;top:139px;" width="16" height="16" viewBox="0 0 16 16">
<defs><linearGradient id="og" x1="0" y1="0" x2="1" y2="0"><stop offset="0" stop-color="#ee7818"/><stop offset="0.450" stop-color="#fad838"/><stop offset="1" stop-color="#ee7818"/></linearGradient></defs>
<rect x="0.500" y="1" width="14.500" height="13.500" rx="2" fill="url(#og)" stroke="#d88020" stroke-width="0.600"/>
<rect x="0.500" y="12.500" width="14.500" height="2" rx="1" fill="#c87418" opacity="0.500"/>
</svg>
<!-- img check -->
<svg class="abs" style="left:896px;top:174px;" width="18" height="18" viewBox="0 0 18 18">
<rect x="4" y="1.500" width="10" height="11" fill="#fafafa" stroke="#a8a8a8" stroke-width="0.700"/><rect x="5.200" y="2.700" width="7.600" height="6.500" fill="#3e7a2a"/><circle cx="9" cy="6" r="2.800" fill="#f2e000"/><circle cx="9" cy="6" r="1.200" fill="#1c1408"/>
<rect x="0.800" y="9" width="8" height="7" rx="1" fill="#e4e4ec" stroke="#b0b0c0" stroke-width="0.700"/>
<path d="M9.500 12.500 L11.500 15 L16 9.500" stroke="#38a838" stroke-width="1.700" fill="none"/>
</svg>
<!-- tag filter icon -->
<svg class="abs" style="left:896px;top:205px;" width="15" height="17" viewBox="0 0 15 17">
<path d="M1 4 L5 1 L10 1 L14 4 L14 16 L1 16Z" fill="#fff" stroke="#c09020" stroke-width="1.300" stroke-linejoin="round"/>
<path d="M1.600 4.300 L5.200 1.600 L9.800 1.600 L13.400 4.300Z" fill="#e8b830"/><circle cx="7.500" cy="3" r="1.100" fill="#fff"/>
<path d="M3 8 L6.500 12.500 L13 6.500 L6.500 10.500Z" fill="#555" stroke="#555" stroke-width="0.600"/>
</svg>
<div class="abs" style="left:893px;top:226px;width:23px;height:58px;"><div style="position:absolute;left:9.700px;top:29px;transform:translate(-50%,-50%) rotate(90deg);font-size:12.500px;white-space:nowrap;line-height:14px;">Tag Filters</div></div>

<!-- STATUS BAR -->
<div class="sunk" style="left:2px;top:592px;width:651px;height:19px;"></div>
<div class="abs" style="left:4px;top:594px;font-size:12.1px;line-height:14px;">JJI_4416.JPG</div>


<div class="sunk" style="left:655px;top:590px;width:166px;height:23px;border-radius:2px;"></div>
<div class="sunk" style="left:823px;top:592px;width:90px;height:18px;"></div>
<svg class="abs" style="left:655px;top:592px;" width="261" height="19" viewBox="655 592 261 19">
<defs><linearGradient id="lens2" x1="0" y1="0" x2="1" y2="1"><stop offset="0" stop-color="#ffffff"/><stop offset="1" stop-color="#c4cede"/></linearGradient>
<linearGradient id="ar1" x1="0" y1="0" x2="1" y2="0.300"><stop offset="0" stop-color="#c6c6c6"/><stop offset="1" stop-color="#8e8e8e"/></linearGradient>
<linearGradient id="ar2" x1="0" y1="0" x2="1" y2="0.300"><stop offset="0" stop-color="#6a6a6a"/><stop offset="1" stop-color="#121212"/></linearGradient>
<path id="arw" d="M0 7 L6.500 0.500 L8.300 2.300 L5.300 5.500 L13 5.500 L13 8.500 L5.300 8.500 L8.300 11.700 L6.500 13.500Z"/>
</defs>
<!-- zoom out -->
<path d="M668 602.500 L673 607.500" stroke="#b87818" stroke-width="2.800" stroke-linecap="round"/><path d="M668 602.500 L673 607.500" stroke="#f0b040" stroke-width="1.300" stroke-linecap="round"/>
<circle cx="664.800" cy="599" r="5.300" fill="url(#lens2)" stroke="#aab2c2" stroke-width="1.200"/>
<rect x="659.200" y="605.400" width="4.800" height="2.300" fill="#48c448" stroke="#2c9c2c" stroke-width="0.400"/>
<!-- groove -->
<rect x="678.500" y="599.500" width="119" height="3" rx="1" fill="#f8f8f8" stroke="#b4b4b4" stroke-width="1"/>
<!-- handle -->
<path d="M696.500 596 Q696.500 594.500 698 594.500 L705 594.500 Q706.500 594.500 706.500 596 L706.500 603.500 L701.500 608.800 L696.500 603.500Z" fill="#fafafa" stroke="#a0a0a0" stroke-width="1"/>
<path d="M699 598 v-1.500 h1.500 M703 598 v-1.500 h1.500" stroke="#b8b8b8" stroke-width="0.800" fill="none"/>
<!-- zoom in -->
<path d="M810.500 602.500 L815.500 607.500" stroke="#b87818" stroke-width="2.800" stroke-linecap="round"/><path d="M810.500 602.500 L815.500 607.500" stroke="#f0b040" stroke-width="1.300" stroke-linecap="round"/>
<circle cx="807.300" cy="599" r="5.300" fill="url(#lens2)" stroke="#aab2c2" stroke-width="1.200"/>
<path d="M800.500 605.200 h2 v-2 h2 v2 h2 v2 h-2 v2 h-2 v-2 h-2z" fill="#3cbc3c" stroke="#228c22" stroke-width="0.300"/>
<!-- nav -->
<rect x="827.800" y="594.300" width="2.400" height="13.400" fill="#c2c2c2"/>
<path d="M842 601 H831.500 M837 595 L830.800 601 L837 607" stroke="url(#ar1)" stroke-width="3.200" fill="none"/>
<path d="M864 601 H853 M858.500 595 L852.300 601 L858.500 607" stroke="url(#ar1)" stroke-width="3.200" fill="none"/>
<path d="M872 601 H883 M877.500 595 L883.700 601 L877.500 607" stroke="url(#ar2)" stroke-width="3.200" fill="none"/>
<path d="M894 601 H904.500 M899 595 L905.200 601 L899 607" stroke="url(#ar2)" stroke-width="3.200" fill="none"/>
<rect x="905.800" y="594.300" width="2.400" height="13.400" fill="#141414"/>
</svg>

</div></body>
</html>
